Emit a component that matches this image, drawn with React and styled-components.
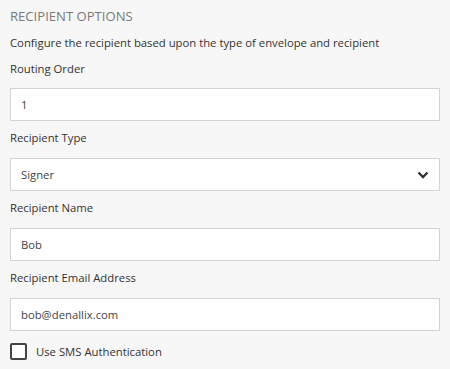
import React from "react";
import styled, { createGlobalStyle } from "styled-components";

const GlobalStyle = createGlobalStyle`
  html, body {
    margin: 0;
    padding: 0;
    background: #f7f7f7;
  }
  body {
    font-family: "Open Sans", "Noto Sans", sans-serif;
  }
`;

const Panel = styled.div`
  width: 450px;
  height: 369px;
  box-sizing: border-box;
  padding: 6px 10px 0 10px;
  background: #f7f7f7;
  overflow: hidden;
`;

const Title = styled.h3`
  margin: 0;
  font-size: 13.1px;
  font-weight: 400;
  line-height: 20px;
  color: #7a7a7a;
  text-transform: uppercase;
`;

const Description = styled.p`
  margin: 8px 0 0 0;
  font-size: 11.3px;
  line-height: 18px;
  color: #333;
`;

const Field = styled.div`
  display: flex;
  flex-direction: column;
`;

const Label = styled.label`
  font-size: 11.3px;
  line-height: 18px;
  color: #333;
  padding: ${(p) => (p.first ? "8px 0 10px" : "8px 0 11px")};
`;

const Input = styled.input`
  box-sizing: border-box;
  width: 430px;
  height: 33px;
  padding: 0 10px;
  border: 1px solid #d4d4d4;
  border-radius: 0;
  background: #fff;
  font-family: "Open Sans", "Noto Sans", sans-serif;
  font-size: 11.3px;
  color: #444;
  outline: none;
`;

const SelectBox = styled.div`
  box-sizing: border-box;
  width: 430px;
  height: 33px;
  padding: 0 10px;
  border: 1px solid #d4d4d4;
  background: #fff;
  display: flex;
  align-items: center;
  justify-content: space-between;
  font-size: 11.3px;
  color: #444;
`;

const CheckRow = styled.label`
  display: flex;
  align-items: center;
  gap: 9px;
  margin-top: 12px;
  font-size: 11.3px;
  color: #333;
`;

const Box = styled.span`
  box-sizing: border-box;
  width: 17px;
  height: 17px;
  border: 2px solid #444;
  border-radius: 2px;
  background: #fff;
`;

const Chevron = () => (
  <svg width="12" height="8" viewBox="0 0 12 8">
    <path d="M1.5 1.5 L6 6 L10.5 1.5" fill="none" stroke="#333" strokeWidth="2.4" />
  </svg>
);

export default function App() {
  return (
    <>
      <GlobalStyle />
      <Panel>
        <Title>Recipient Options</Title>
        <Description>
          Configure the recipient based upon the type of envelope and recipient
        </Description>
        <Field>
          <Label first>Routing Order</Label>
          <Input defaultValue="1" />
        </Field>
        <Field>
          <Label>Recipient Type</Label>
          <SelectBox>
            <span>Signer</span>
            <Chevron />
          </SelectBox>
        </Field>
        <Field>
          <Label>Recipient Name</Label>
          <Input defaultValue="Bob" />
        </Field>
        <Field>
          <Label>Recipient Email Address</Label>
          <Input defaultValue="bob@denallix.com" />
        </Field>
        <CheckRow>
          <Box />
          Use SMS Authentication
        </CheckRow>
      </Panel>
    </>
  );
}
